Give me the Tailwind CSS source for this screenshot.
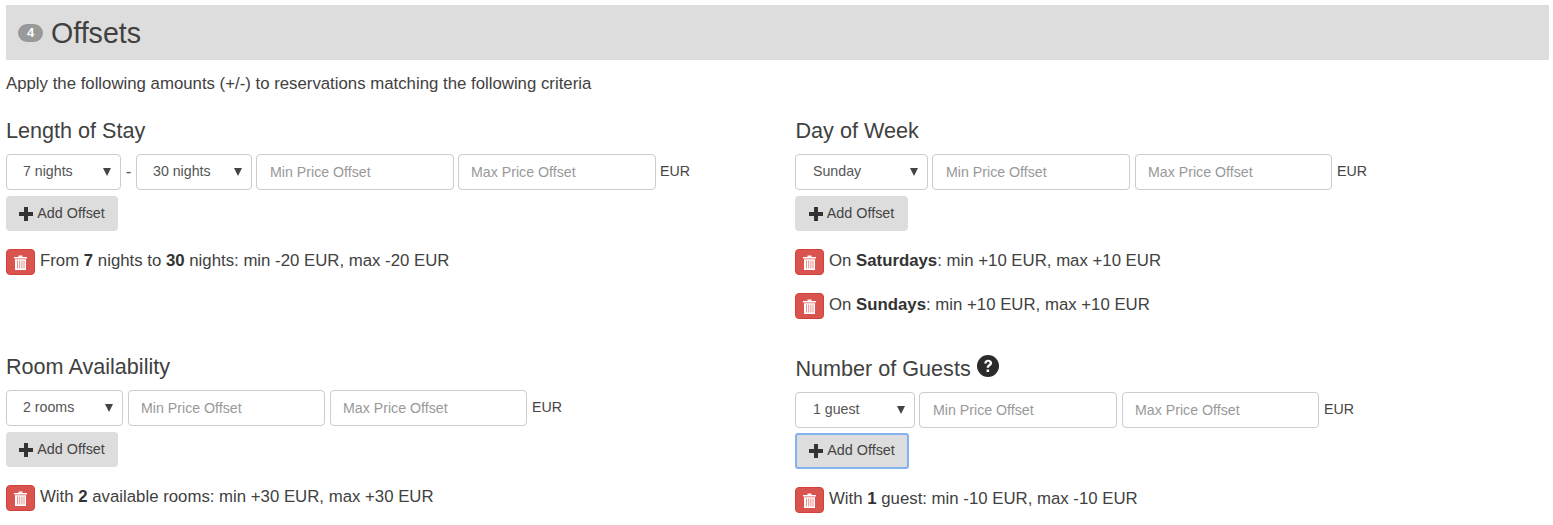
<!DOCTYPE html>
<html lang="en">
<head>
    <meta charset="UTF-8">
    <title>Offsets</title>
    <script src="https://cdn.jsdelivr.net/npm/@tailwindcss/browser@4"></script>
</head>
<body class="bg-white text-[#414141] font-['Liberation_Sans',Arial,sans-serif] overflow-hidden">
<div class="h-[525px] overflow-hidden pt-[5px] pl-[6px] pr-[4px]">
    <div class="h-[55px] bg-[#ddd] flex items-center pl-[12px]">
        <span class="w-[25px] h-[18px] rounded-[9px] bg-[#999] text-white text-[13px] font-bold leading-[18px] text-center">4</span>
        <h2 class="ml-[8px] text-[28.6px] leading-[30px]">Offsets</h2>
    </div>
    <p class="mt-[15px] text-[16.8px] leading-[18px]">Apply the following amounts (+/-) to reservations matching the following criteria</p>

    <div class="grid grid-cols-[789px_1fr] mt-[25px]">
        <!-- length of stay -->
        <section class="h-[236px]">
            <h3 class="text-[21.6px] leading-[26px]">Length of Stay</h3>
            <div class="flex items-center mt-[10px]">
                <div class="relative w-[115px] h-[36px]">
                    <select class="appearance-none w-full h-full border border-[#ccc] rounded-[4px] bg-white pl-[16px] text-[14.2px] text-[#555]"><option>7 nights</option></select>
                    <svg class="absolute right-[10px] top-[14px] w-[8px] h-[8px] pointer-events-none" viewBox="0 0 8 8"><path d="M0 0h8L4 8z" fill="#444"/></svg>
                </div>
                <span class="w-[15px] text-center text-[16.8px] text-[#555]">-</span>
                <div class="relative w-[116px] h-[36px]">
                    <select class="appearance-none w-full h-full border border-[#ccc] rounded-[4px] bg-white pl-[16px] text-[14.2px] text-[#555]"><option>30 nights</option></select>
                    <svg class="absolute right-[10px] top-[14px] w-[8px] h-[8px] pointer-events-none" viewBox="0 0 8 8"><path d="M0 0h8L4 8z" fill="#444"/></svg>
                </div>
                <input class="ml-[4px] w-[198px] h-[36px] border border-[#ccc] rounded-[4px] px-[13px] text-[14.2px] placeholder:text-[#999]" placeholder="Min Price Offset">
                <input class="ml-[4px] w-[198px] h-[36px] border border-[#ccc] rounded-[4px] px-[12px] text-[14.2px] placeholder:text-[#999]" placeholder="Max Price Offset">
                <span class="ml-[4px] text-[14.2px] text-[#444]">EUR</span>
            </div>
            <button class="mt-[6px] w-[112px] h-[35px] bg-[#ddd] rounded-[4px] flex items-center justify-center gap-[4px] text-[14.4px] text-[#444]">
                <svg class="w-[14px] h-[14px]" viewBox="0 0 14 14"><path d="M5 0h4v5h5v4H9v5H5V9H0V5h5z" fill="#333"/></svg>Add Offset
            </button>
            <div class="mt-[18px] flex items-center h-[26px] gap-[5px] text-[16.8px]">
                <button class="w-[29px] h-[26px] bg-[#d9534f] border border-[#d43f3a] rounded-[4px] flex items-center justify-center">
                    <svg class="w-[13px] h-[15px]" viewBox="0 0 13 15"><path d="M4.500 2V.6h4V2H13v1.400H0V2zM1 4.200h11V15H1z" fill="#fff"/><path d="M3.500 5.500v8M5.700 5.500v8M7.900 5.500v8M10 5.500v8" stroke="#e9908d" stroke-width="1"/></svg>
                </button>
                <span class="mb-[2px]">From <b class="text-[#333]">7</b> nights to <b class="text-[#333]">30</b> nights: min -20 EUR, max -20 EUR</span>
            </div>
        </section>

        <!-- day of week -->
        <section class="h-[236px]">
            <h3 class="text-[21.6px] leading-[26px] ml-[0.5px]">Day of Week</h3>
            <div class="flex items-center mt-[10px]">
                <div class="relative w-[133px] h-[36px]">
                    <select class="appearance-none w-full h-full border border-[#ccc] rounded-[4px] bg-white pl-[17px] text-[14.2px] text-[#555]"><option>Sunday</option></select>
                    <svg class="absolute right-[10px] top-[14px] w-[8px] h-[8px] pointer-events-none" viewBox="0 0 8 8"><path d="M0 0h8L4 8z" fill="#444"/></svg>
                </div>
                <input class="ml-[4px] w-[198px] h-[36px] border border-[#ccc] rounded-[4px] px-[13px] text-[14.2px] placeholder:text-[#999]" placeholder="Min Price Offset">
                <input class="ml-[5px] w-[197px] h-[36px] border border-[#ccc] rounded-[4px] px-[12px] text-[14.2px] placeholder:text-[#999]" placeholder="Max Price Offset">
                <span class="ml-[5px] text-[14.2px] text-[#444]">EUR</span>
            </div>
            <button class="mt-[6px] w-[113px] h-[35px] bg-[#ddd] rounded-[4px] flex items-center justify-center gap-[4px] text-[14.4px] text-[#444]">
                <svg class="w-[14px] h-[14px]" viewBox="0 0 14 14"><path d="M5 0h4v5h5v4H9v5H5V9H0V5h5z" fill="#333"/></svg>Add Offset
            </button>
            <div class="mt-[18px] flex items-center h-[26px] gap-[5px] text-[16.8px]">
                <button class="w-[29px] h-[26px] bg-[#d9534f] border border-[#d43f3a] rounded-[4px] flex items-center justify-center">
                    <svg class="w-[13px] h-[15px]" viewBox="0 0 13 15"><path d="M4.500 2V.6h4V2H13v1.400H0V2zM1 4.200h11V15H1z" fill="#fff"/><path d="M3.500 5.500v8M5.700 5.500v8M7.900 5.500v8M10 5.500v8" stroke="#e9908d" stroke-width="1"/></svg>
                </button>
                <span class="mb-[2px]">On <b class="text-[#333]">Saturdays</b>: min +10 EUR, max +10 EUR</span>
            </div>
            <div class="mt-[18px] flex items-center h-[26px] gap-[5px] text-[16.8px]">
                <button class="w-[29px] h-[26px] bg-[#d9534f] border border-[#d43f3a] rounded-[4px] flex items-center justify-center">
                    <svg class="w-[13px] h-[15px]" viewBox="0 0 13 15"><path d="M4.500 2V.6h4V2H13v1.400H0V2zM1 4.200h11V15H1z" fill="#fff"/><path d="M3.500 5.500v8M5.700 5.500v8M7.900 5.500v8M10 5.500v8" stroke="#e9908d" stroke-width="1"/></svg>
                </button>
                <span class="mb-[2px]">On <b class="text-[#333]">Sundays</b>: min +10 EUR, max +10 EUR</span>
            </div>
        </section>

        <!-- room availability -->
        <section>
            <h3 class="text-[21.6px] leading-[26px]">Room Availability</h3>
            <div class="flex items-center mt-[10px]">
                <div class="relative w-[117px] h-[36px]">
                    <select class="appearance-none w-full h-full border border-[#ccc] rounded-[4px] bg-white pl-[16px] text-[14.2px] text-[#555]"><option>2 rooms</option></select>
                    <svg class="absolute right-[10px] top-[14px] w-[8px] h-[8px] pointer-events-none" viewBox="0 0 8 8"><path d="M0 0h8L4 8z" fill="#444"/></svg>
                </div>
                <input class="ml-[5px] w-[197px] h-[36px] border border-[#ccc] rounded-[4px] px-[12px] text-[14.2px] placeholder:text-[#999]" placeholder="Min Price Offset">
                <input class="ml-[5px] w-[197px] h-[36px] border border-[#ccc] rounded-[4px] px-[12px] text-[14.2px] placeholder:text-[#999]" placeholder="Max Price Offset">
                <span class="ml-[5px] text-[14.2px] text-[#444]">EUR</span>
            </div>
            <button class="mt-[6px] w-[112px] h-[35px] bg-[#ddd] rounded-[4px] flex items-center justify-center gap-[4px] text-[14.4px] text-[#444]">
                <svg class="w-[14px] h-[14px]" viewBox="0 0 14 14"><path d="M5 0h4v5h5v4H9v5H5V9H0V5h5z" fill="#333"/></svg>Add Offset
            </button>
            <div class="mt-[18px] flex items-center h-[26px] gap-[5px] text-[16.8px]">
                <button class="w-[29px] h-[26px] bg-[#d9534f] border border-[#d43f3a] rounded-[4px] flex items-center justify-center">
                    <svg class="w-[13px] h-[15px]" viewBox="0 0 13 15"><path d="M4.500 2V.6h4V2H13v1.400H0V2zM1 4.200h11V15H1z" fill="#fff"/><path d="M3.500 5.500v8M5.700 5.500v8M7.900 5.500v8M10 5.500v8" stroke="#e9908d" stroke-width="1"/></svg>
                </button>
                <span class="mb-[2px]">With <b class="text-[#333]">2</b> available rooms: min +30 EUR, max +30 EUR</span>
            </div>
        </section>

        <!-- number of guests -->
        <section class="pt-[2px]">
            <h3 class="flex items-center text-[21.6px] leading-[26px] ml-[0.5px]">Number of Guests
                <svg class="ml-[6px] -mt-[6px] w-[22px] h-[22px]" viewBox="0 0 22 22"><circle cx="11" cy="11" r="11" fill="#2b2b2b"/><path d="M7.200 8.400C7.400 6 9 4.800 11.200 4.800c2.300 0 3.900 1.300 3.900 3.200 0 1.500-.9 2.300-1.900 3-.8.6-1.100.9-1.100 1.800H9.700c0-1.600.5-2.300 1.500-3 .8-.6 1.300-1 1.300-1.700 0-.8-.6-1.300-1.400-1.300-.9 0-1.400.6-1.500 1.600zM9.600 14.400h2.500v2.600H9.600z" fill="#fff"/></svg>
            </h3>
            <div class="flex items-center mt-[10px]">
                <div class="relative w-[120px] h-[36px]">
                    <select class="appearance-none w-full h-full border border-[#ccc] rounded-[4px] bg-white pl-[17px] text-[14.2px] text-[#555]"><option>1 guest</option></select>
                    <svg class="absolute right-[10px] top-[14px] w-[8px] h-[8px] pointer-events-none" viewBox="0 0 8 8"><path d="M0 0h8L4 8z" fill="#444"/></svg>
                </div>
                <input class="ml-[4px] w-[198px] h-[36px] border border-[#ccc] rounded-[4px] px-[13px] text-[14.2px] placeholder:text-[#999]" placeholder="Min Price Offset">
                <input class="ml-[5px] w-[197px] h-[36px] border border-[#ccc] rounded-[4px] px-[12px] text-[14.2px] placeholder:text-[#999]" placeholder="Max Price Offset">
                <span class="ml-[5px] text-[14.2px] text-[#444]">EUR</span>
            </div>
            <button class="mt-[5px] w-[114px] h-[36px] bg-[#ddd] border-2 border-[#84b1ef] rounded-[3px] flex items-center justify-center gap-[4px] text-[14.4px] text-[#444]">
                <svg class="w-[14px] h-[14px]" viewBox="0 0 14 14"><path d="M5 0h4v5h5v4H9v5H5V9H0V5h5z" fill="#333"/></svg>Add Offset
            </button>
            <div class="mt-[18px] flex items-center h-[26px] gap-[5px] text-[16.8px]">
                <button class="w-[29px] h-[26px] bg-[#d9534f] border border-[#d43f3a] rounded-[4px] flex items-center justify-center">
                    <svg class="w-[13px] h-[15px]" viewBox="0 0 13 15"><path d="M4.500 2V.6h4V2H13v1.400H0V2zM1 4.200h11V15H1z" fill="#fff"/><path d="M3.500 5.500v8M5.700 5.500v8M7.900 5.500v8M10 5.500v8" stroke="#e9908d" stroke-width="1"/></svg>
                </button>
                <span class="mb-[2px]">With <b class="text-[#333]">1</b> guest: min -10 EUR, max -10 EUR</span>
            </div>
        </section>
    </div>
</div>
</body>
</html>
